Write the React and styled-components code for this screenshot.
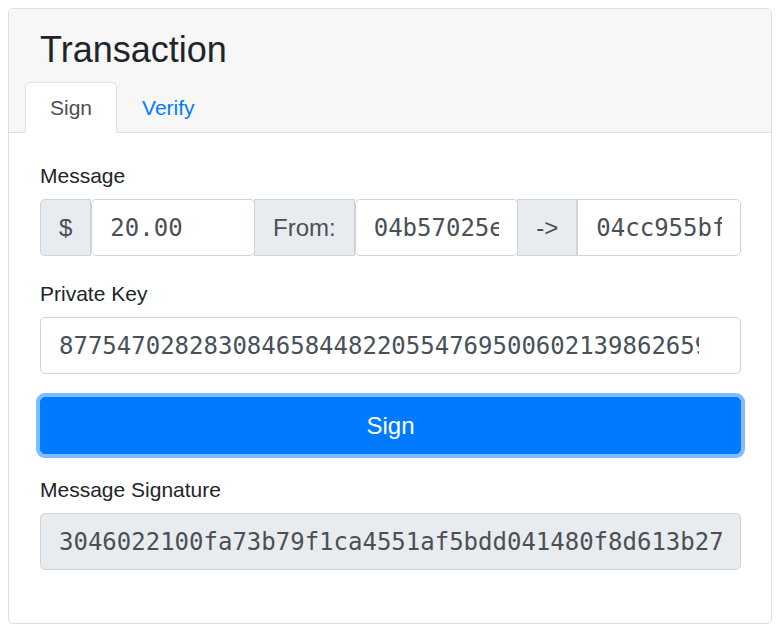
import React from "react";
import styled, { createGlobalStyle } from "styled-components";

const GlobalStyle = createGlobalStyle`
  body {
    margin: 8px;
    font-family: "Liberation Sans", Arial, sans-serif;
    color: #212529;
    background: #fff;
  }
  * { box-sizing: border-box; }
`;

const Card = styled.div`
  width: 764px;
  border: 1px solid #dfdfdf;
  border-radius: 5px;
  overflow: hidden;
  background: #fff;
`;

const Header = styled.div`
  background: #f7f7f7;
  border-bottom: 1px solid #dfdfdf;
  padding: 20px 30px 0 31px;
`;

const Title = styled.h3`
  margin: 0 0 11px;
  font-size: 36px;
  font-weight: 400;
  line-height: 42px;
  color: #212529;
`;

const Tabs = styled.ul`
  display: flex;
  list-style: none;
  margin: 0 0 -1px -15px;
  padding: 0;
`;

const Tab = styled.li`
  padding: 10px 24px 9px;
  font-size: 21px;
  line-height: 30px;
  border: 1px solid ${(p) => (p.$active ? "#dee2e6" : "transparent")};
  border-bottom-color: ${(p) => (p.$active ? "#fff" : "transparent")};
  border-radius: 5px 5px 0 0;
  background: ${(p) => (p.$active ? "#fff" : "transparent")};
  color: ${(p) => (p.$active ? "#495057" : "#007bff")};
`;

const Body = styled.div`
  padding: 28px 30px 30px 31px;
`;

const Group = styled.div`
  margin-bottom: ${(p) => p.$gap ?? 23}px;
`;

const Label = styled.label`
  display: block;
  font-size: 21px;
  line-height: 30px;
  margin-bottom: 8px;
  color: #212529;
`;

const InputGroup = styled.div`
  display: flex;
  align-items: stretch;
  & > * + * { margin-left: -1px; }
  & > :first-child { border-radius: 5px 0 0 5px; }
  & > :last-child { border-radius: 0 5px 5px 0; }
`;

const Addon = styled.span`
  display: flex;
  align-items: center;
  height: 57px;
  padding: 0 18px;
  font-size: 24px;
  color: #495057;
  background: #e9ecef;
  border: 1px solid #ced4da;
  white-space: nowrap;
`;

const Field = styled.input`
  display: block;
  flex: 1 1 0;
  min-width: 0;
  width: 100%;
  height: 57px;
  margin: 0;
  padding: 0 ${(p) => p.$padRight ?? 18}px 0 18px;
  font-family: "DejaVu Sans Mono", monospace;
  font-size: 24px;
  color: #495057;
  background: ${(p) => (p.readOnly ? "#e9ecef" : "#fff")};
  border: 1px solid #ced4da;
  border-radius: 5px;
  outline: none;
`;

const Button = styled.button`
  display: block;
  width: 100%;
  height: 57px;
  font-family: "Liberation Sans", Arial, sans-serif;
  font-size: 24px;
  color: #fff;
  background: #007bff;
  border: 1px solid #007bff;
  border-radius: 5px;
  box-shadow: 0 0 0 4px rgba(0, 123, 255, 0.5);
  cursor: pointer;
`;

export default function App() {
  return (
    <>
      <GlobalStyle />
      <Card>
        <Header>
          <Title>Transaction</Title>
          <Tabs>
            <Tab $active>Sign</Tab>
            <Tab>Verify</Tab>
          </Tabs>
        </Header>
        <Body>
          <Group>
            <Label>Message</Label>
            <InputGroup>
              <Addon>$</Addon>
              <Field defaultValue="20.00" />
              <Addon>From:</Addon>
              <Field defaultValue="04b57025e" />
              <Addon>-&gt;</Addon>
              <Field defaultValue="04cc955bf" />
            </InputGroup>
          </Group>
          <Group>
            <Label>Private Key</Label>
            <Field
              $padRight={41}
              defaultValue="877547028283084658448220554769500602139862659"
            />
          </Group>
          <Group $gap={21}>
            <Button>Sign</Button>
          </Group>
          <Group>
            <Label>Message Signature</Label>
            <Field readOnly defaultValue="3046022100fa73b79f1ca4551af5bdd041480f8d613b27" />
          </Group>
        </Body>
      </Card>
    </>
  );
}
